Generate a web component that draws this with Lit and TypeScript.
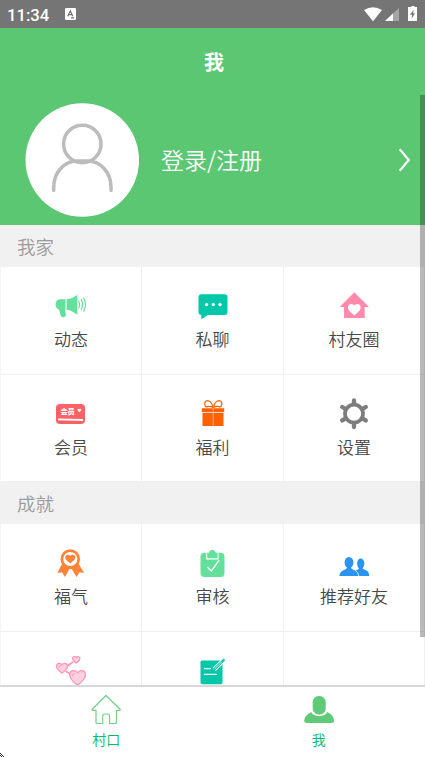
import { LitElement, html, svg, css, nothing } from "lit";
import { customElement, property } from "lit/decorators.js";

const heart = (x: number, y: number, w: number, h: number, fill: string, stroke = "none") => svg`
  <svg x=${x} y=${y} width=${w} height=${h} viewBox="0 0 20 20" preserveAspectRatio="none" overflow="visible">
    <path d="M10 20C7 17 0 12 0 6C0 2 2.500 0 5.300 0C7.500 0 9.200 1.300 10 3C10.800 1.300 12.500 0 14.700 0C17.500 0 20 2 20 6C20 12 13 17 10 20Z"
      fill=${fill} stroke=${stroke} stroke-width="1.2" vector-effect="non-scaling-stroke"/>
  </svg>`;

const icons: Record<string, unknown> = {
  megaphone: svg`
    <path fill="#65df9c" d="M12.500 12.300V22.800H11.800L13 27.500Q13 30 10.500 30.200Q8.200 30.400 7.500 28L6 22.500Q2.600 21.500 2.600 17.500Q2.600 12.300 7.500 12.300ZM13.600 12.300Q19.500 12 24.300 7.800V28Q19.500 23.500 13.600 22.800Z"/>
    <g fill="none" stroke="#65df9c" stroke-width="1.200" stroke-linecap="round">
      <path d="M25.800 14.200Q27.500 17.500 25.800 20.800M28.200 12.500Q31 17.500 28.200 22.500M30.700 11Q34.300 17.500 30.700 24.200"/>
    </g>`,
  chat: svg`
    <path fill="#00c8a8" d="M6.500 7.300H29.500Q32.500 7.300 32.500 10.300V25Q32.500 28 29.500 28H13L6.300 32.300V28Q3.500 27.800 3.500 25V10.300Q3.500 7.300 6.500 7.300Z"/>
    <g fill="#fff"><circle cx="11.600" cy="17.600" r="1.700"/><circle cx="18.300" cy="17.600" r="1.700"/><circle cx="25" cy="17.600" r="1.700"/></g>`,
  house: svg`
    <path fill="#ff8aab" d="M18.300 5.300L33 20H28.700V31H8V20H3.700Z"/>${heart(12, 17, 12.600, 11.300, "#fff")}`,
  card: svg`
    <rect x="3" y="9" width="29" height="20" rx="4" fill="#ff6166"/>
    <path d="M5 24.400L30 25" stroke="#fff" stroke-width="1.900"/>
    <text x="7.400" y="19.300" font-size="7.200" font-weight="900" fill="#fff">会员</text>
    ${heart(24.600, 13.800, 3.600, 3.500, "#fff")}`,
  gift: svg`
    <path fill="#ff6000" d="M6.800 13.300H29.200V17H6.800ZM7.500 17.700H28.500V31H7.500Z"/>
    <path d="M18.200 13.300V31" stroke="#ffd0b0" stroke-width=".8"/>
    <path d="M17.600 12.300C17.500 9 15.500 6 12.500 5.700C9.500 5.600 8.800 9.500 11 12.100M18.800 12.300C19 9 21 6 24 5.700C27 5.600 27.800 9.500 25.500 12.100M11 12.100Q14 10.500 18.200 12.500Q22 10.500 25.500 12.100" fill="none" stroke="#ff6000" stroke-width="1.300"/>`,
  gear: svg`
    <circle cx="18" cy="18.700" r="9" fill="none" stroke="#7d7d7d" stroke-width="3.700"/>
    <path stroke="#7d7d7d" stroke-width="4.300" stroke-linecap="round" d="M18 8.500V5.500M18 29V32M9 13.600L6.200 12M27 13.600L29.800 12M9 23.800L6.200 25.400M27 23.800L29.800 25.400"/>`,
  medal: svg`
    <path fill="#ff8438" d="M9 20L4.300 29L9 28.300L12 33L16.300 25H18.700L23.500 33L26.500 28.300L31.200 29L25.800 20Z"/>
    <circle cx="17.300" cy="15" r="8.400" fill="#fff" stroke="#ff8438" stroke-width="2.700"/>
    ${heart(12.200, 10.700, 10.200, 8.800, "#ff8438")}`,
  clipboard: svg`
    <rect x="5.500" y="8.700" width="24" height="24.300" rx="4" fill="#64e09c"/>
    <path d="M11.700 9.300V14.900H23V9.300" fill="none" stroke="#fff" stroke-width="1.200"/>
    <path d="M12.500 13.200V9.600Q14 9.500 14.300 8Q14.500 6 17.200 5.800Q20 6 20.300 8Q20.600 9.500 22.200 9.600V13.200Z" fill="#64e09c"/>
    <path d="M12.500 23.300L16.400 27L24.100 16.200" fill="none" stroke="#fff" stroke-width="1.300"/>`,
  friends: svg`
    <g fill="#2b94f0"><ellipse cx="24.700" cy="19.600" rx="3.600" ry="5"/><path d="M19.800 26.200Q22.600 25.500 23 24.200V22H26.500V24.200Q28 25.700 30 26.300Q33 27.500 33.200 32H23.200Q22.600 28.500 19.800 26.200Z"/>
    <ellipse cx="13" cy="18.500" rx="4.400" ry="5.600"/><path d="M3.300 32Q3.700 27.500 8.500 25.800Q11 25 11 23.500V22H15V23.500Q15 25 17.500 25.800Q22 27.500 22.300 32Z"/></g>`,
  hearts: svg`
    <path d="M20 10L13.500 14.500M12.500 19.200L18 22" stroke="#ff94b4" stroke-width="1.700"/>
    ${heart(19.500, 4.500, 7.500, 6.600, "#ffd0e0", "#ff94b4")}
    ${heart(3.500, 11.300, 11, 10, "#ffd0e0", "#ff94b4")}
    ${heart(16.600, 18.600, 15.900, 14.700, "#ffd0e0", "#ff94b4")}
    <path d="M6 15.500Q6 13.500 8 13.400M19.500 24Q19.500 21.500 21.800 21.300" fill="none" stroke="#ff94b4"/>`,
  note: svg`
    <rect x="5.500" y="8.500" width="22" height="23.700" rx="1.800" fill="#00c8a8"/>
    <path d="M8.900 16.700H16M8.900 22.400H22" stroke="#fff" stroke-width="1.300"/>
    <path d="M29.200 7.600L19 17.700" stroke="#fff" stroke-width="4.600"/>
    <path d="M29.400 7.400L18.500 18.200" stroke="#00c8a8" stroke-width="2.500"/>
    <path d="M27 9.600L19.500 17.100" stroke="#fff" stroke-width=".7"/>`,
};

@customElement("grid-cell")
export class GridCell extends LitElement {
  @property() icon = "";
  @property() label = "";
  static styles = css`
    :host { display: flex; flex-direction: column; align-items: center; box-sizing: border-box; padding-top: 20px; border-right: 1px solid #efefef; border-bottom: 1px solid #efefef; background: #fff; overflow: hidden; }
    .icon { width: 36px; height: 36px; flex: none; }
    .label { margin-top: 3px; font-size: 17px; line-height: 25px; color: #484848; white-space: nowrap; }
  `;
  render() {
    return this.icon
      ? html`<svg class="icon" viewBox="0 0 36 36">${icons[this.icon]}</svg><div class="label">${this.label}</div>`
      : nothing;
  }
}

@customElement("app-root")
export class AppRoot extends LitElement {
  static styles = css`
    :host { position: relative; display: flex; flex-direction: column; width: 425px; height: 757px; overflow: hidden; background: #fff; font-family: "Noto Sans CJK SC", sans-serif; font-weight: 350; }
    .status { height: 28px; flex: none; box-sizing: border-box; display: flex; align-items: center; padding: 2px 7px 0; background: #757575; color: #fff; font: 500 16.7px Roboto, sans-serif; }
    .status .tray { margin-left: 16px; width: 11px; height: 12px; margin-top: -2px; }
    .status .right { width: 56px; height: 18px; margin: -2px -1px 0 auto; }
    .title { height: 67px; flex: none; background: #5bc772; color: #fff; text-align: center; font-size: 20px; font-weight: 700; line-height: 67px; padding-left: 3px; }
    .content { flex: 1; min-height: 0; overflow: hidden; }
    .profile { height: 130px; box-sizing: border-box; padding: 0 13px 0 25px; background: #5bc772; display: flex; align-items: center; color: #fff; }
    .avatar { width: 114px; height: 114px; }
    .login { margin: 0 0 2px 22px; font-size: 23px; line-height: 32px; flex: 1; }
    .chevron { width: 14px; height: 26px; }
    .section { height: 42px; padding-left: 17px; background: #f1f1f1; color: #9b9b9b; font-size: 18.5px; line-height: 42px; }
    .grid { display: grid; grid-template-columns: 142px 142px 141px; grid-auto-rows: 108px; }
    .grid.first { grid-template-rows: 108px 107px; }
    .grid > :nth-child(3n + 1) { border-left: 1px solid #f5f5f5; }
    .tabs { height: 72px; flex: none; box-sizing: border-box; border-top: 2px solid #d8d8d8; background: #fff; display: grid; grid-template-columns: 1fr 1fr; color: #00ba66; font-size: 14px; }
    .tab { display: flex; flex-direction: column; align-items: center; padding-top: 5px; }
    .tab svg { width: 34px; height: 34px; }
    .tab span { line-height: 20px; margin-top: 3px; }
    .scroll { position: absolute; right: 0; top: 95px; width: 5px; height: 542px; background: rgba(0, 0, 0, .27); }
    .corner { position: absolute; left: 0; bottom: 0; width: 5px; height: 4px; }
  `;

  private cells(items: string[][]) {
    return items.map(([icon, label]) => html`<grid-cell icon=${icon} label=${label}></grid-cell>`);
  }

  render() {
    return html`
      <div class="status">
        <span>11:34</span>
        <svg class="tray" viewBox="0 0 11 12"><rect width="11" height="12" rx="1.200" fill="#fff"/><path d="M2.800 8.300L5.300 3L7.800 8.300M3.700 6.600H7M6 9.800H9" fill="none" stroke="#757575" stroke-width="1.300"/></svg>
        <svg class="right" viewBox="0 0 56 18">
          <path fill="#fff" d="M1 5Q10 -.700 19 5L10 16.300Z"/>
          <path fill="#a5a5a5" d="M36 3V16H22Z"/><path fill="#fff" d="M30 8.600V16H22Z"/>
          <path fill="#fff" d="M47 2H48.500V1H51.500V2H54V16H45V2Z"/><path fill="#757575" d="M50.800 4.500L47 9.800H49.200L48.500 13.800L52 8.300H50Z"/>
        </svg>
      </div>
      <div class="title">我</div>
      <div class="content">
        <div class="profile">
          <svg class="avatar" viewBox="0 0 114 114">
            <circle cx="57.300" cy="57" r="56.800" fill="#fff"/>
            <g fill="none" stroke="#bcbcbc" stroke-width="3.500" stroke-linecap="round"><circle cx="57.300" cy="41" r="18.700"/><path d="M28.700 87.500V84C28.700 70 39 58 52 58H62.500C76 58 86 70 86 84V87.500"/></g>
          </svg>
          <div class="login">登录/注册</div>
          <svg class="chevron" viewBox="0 0 14 26"><path d="M1.700 2.200L10.800 13L1.700 23.800" fill="none" stroke="#fff" stroke-width="2.200"/></svg>
        </div>
        <div class="section">我家</div>
        <div class="grid first">${this.cells([["megaphone", "动态"], ["chat", "私聊"], ["house", "村友圈"], ["card", "会员"], ["gift", "福利"], ["gear", "设置"]])}</div>
        <div class="section">成就</div>
        <div class="grid">${this.cells([["medal", "福气"], ["clipboard", "审核"], ["friends", "推荐好友"], ["hearts", ""], ["note", ""], ["", ""]])}</div>
      </div>
      <div class="tabs">
        <div class="tab">
          <svg viewBox="0 0 34 34"><path d="M17 3.500L31.200 17.200Q31.500 18.300 30.500 18.300H27.500V30.800Q27.500 31.500 26.500 31.500H20.500V24Q20.500 22 18.500 22H15.800Q13.700 22 13.700 24V31.500H8Q7 31.500 7 30.500V18.300H3.800Q2.700 18.300 3.200 17.200Z" fill="none" stroke="#73cf87" stroke-width="1.200" stroke-linejoin="round"/></svg>
          <span>村口</span>
        </div>
        <div class="tab">
          <svg viewBox="0 0 34 34"><g fill="#60ca79"><rect x="10.700" y="4" width="13" height="18.500" rx="6.300"/><path d="M9.300 20C11 25.500 23.500 25.500 25.200 20Q32 23.500 32 28.500Q32 31 29.500 31H5Q2.200 31 2.200 28.500Q2.500 23.500 9.300 20Z"/></g></svg>
          <span>我</span>
        </div>
      </div>
      <div class="scroll"></div>
      <svg class="corner" viewBox="0 0 5 4"><path d="M0 0H1V1H2V2H3V3H4V4H3V3H2V2H1V1H0ZM0 2H1V3H2V4H1V3H0Z" fill="#222"/></svg>
    `;
  }
}
